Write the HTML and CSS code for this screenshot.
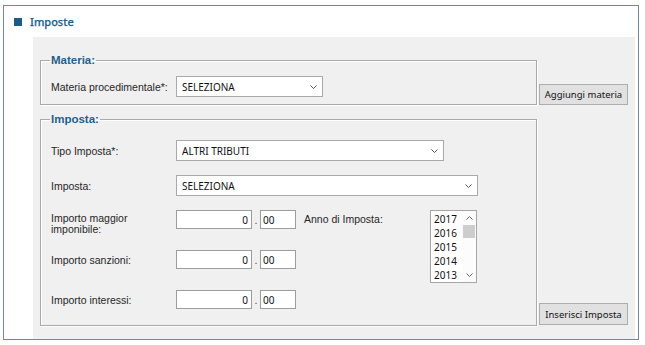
FILE: index.html
```html
<!DOCTYPE html>
<html lang="it">
<head>
    <meta charset="UTF-8">
    <title>Imposte</title>
    <link rel="stylesheet" href="styles.css">
</head>
<body>

<div class="frame">
    <div class="frame-head">
        <span class="head-square"></span>
        <span class="head-title">Imposte</span>
    </div>

    <div class="panel">
        <div class="group-row">
            <fieldset class="group group-materia">
                <legend>Materia:</legend>
                <div class="field">
                    <label class="field-label">Materia procedimentale*:</label>
                    <div class="select select-materia">
                        <span>SELEZIONA</span>
                        <svg class="chevron" width="7" height="4" viewBox="0 0 7 4"><path d="M0.5 0.5 L3.5 3.5 L6.5 0.5" fill="none" stroke="#555" stroke-width="1"/></svg>
                    </div>
                </div>
            </fieldset>
            <button class="btn btn-materia">Aggiungi materia</button>
        </div>

        <div class="group-row group-row-imposta">
            <fieldset class="group group-imposta">
                <legend>Imposta:</legend>
                <div class="field">
                    <label class="field-label">Tipo Imposta*:</label>
                    <div class="select select-tipo">
                        <span>ALTRI TRIBUTI</span>
                        <svg class="chevron" width="7" height="4" viewBox="0 0 7 4"><path d="M0.5 0.5 L3.5 3.5 L6.5 0.5" fill="none" stroke="#555" stroke-width="1"/></svg>
                    </div>
                </div>
                <div class="field">
                    <label class="field-label">Imposta:</label>
                    <div class="select select-imposta">
                        <span>SELEZIONA</span>
                        <svg class="chevron" width="7" height="4" viewBox="0 0 7 4"><path d="M0.5 0.5 L3.5 3.5 L6.5 0.5" fill="none" stroke="#555" stroke-width="1"/></svg>
                    </div>
                </div>

                <div class="amounts">
                    <div class="amount-list">
                        <div class="amount-row">
                            <label class="field-label label-two">Importo maggior<br>imponibile:</label>
                            <input class="num-int" type="text" value="0">
                            <span class="num-dot">.</span>
                            <input class="num-dec" type="text" value="00">
                        </div>
                        <div class="amount-row">
                            <label class="field-label">Importo sanzioni:</label>
                            <input class="num-int" type="text" value="0">
                            <span class="num-dot">.</span>
                            <input class="num-dec" type="text" value="00">
                        </div>
                        <div class="amount-row">
                            <label class="field-label">Importo interessi:</label>
                            <input class="num-int" type="text" value="0">
                            <span class="num-dot">.</span>
                            <input class="num-dec" type="text" value="00">
                        </div>
                    </div>

                    <div class="anno-label">Anno di Imposta:</div>
                    <div class="listbox">
                        <ul class="listbox-items">
                            <li>2017</li>
                            <li>2016</li>
                            <li>2015</li>
                            <li>2014</li>
                            <li>2013</li>
                        </ul>
                        <div class="scrollbar">
                            <div class="scroll-btn">
                                <svg width="7" height="4" viewBox="0 0 7 4"><path d="M0.5 3.5 L3.5 0.5 L6.5 3.5" fill="none" stroke="#606060" stroke-width="1"/></svg>
                            </div>
                            <div class="scroll-thumb"></div>
                            <div class="scroll-track"></div>
                            <div class="scroll-btn">
                                <svg width="7" height="4" viewBox="0 0 7 4"><path d="M0.5 0.5 L3.5 3.5 L6.5 0.5" fill="none" stroke="#606060" stroke-width="1"/></svg>
                            </div>
                        </div>
                    </div>
                </div>
            </fieldset>
            <button class="btn btn-imposta">Inserisci Imposta</button>
        </div>
    </div>
</div>

</body>
</html>
```

FILE: styles.css
```css
body {
    margin: 5px 6px 5px 3px;
    font-family: "Liberation Sans", Arial, sans-serif;
    font-size: 10.5px;
    color: #262626;
    background: #fff;
}

.frame {
    box-sizing: border-box;
    height: 335px;
    border: 1px solid #6c88ae;
    display: flex;
    flex-direction: column;
}

.frame-head {
    height: 31px;
    display: flex;
    align-items: center;
    padding-left: 10px;
    gap: 8px;
}

.head-square {
    width: 8px;
    height: 8px;
    background: #1d5a86;
}

.head-title {
    font-family: "Noto Sans", sans-serif;
    font-size: 11px;
    font-weight: 500;
    color: #1f5f8b;
    -webkit-text-stroke: 0.25px #1f5f8b;
}

.panel {
    flex: 1;
    margin: 0 3px 0 29px;
    padding: 16px 0 0 7px;
    background: #f0f0f0;
}

.group-row {
    display: flex;
    align-items: flex-end;
    gap: 2px;
}

.group-row-imposta {
    margin-top: 7px;
}

.group {
    box-sizing: border-box;
    width: 497px;
    margin: 0;
    padding: 9px 10px 7px 10px;
    border: 1px solid #a9a9a9;
    box-shadow: inset 1px 1px 0 #fff, 1px 1px 0 #fff;
}

.group legend {
    padding: 0 1px;
    margin-left: -1px;
    font-weight: bold;
    font-size: 11.5px;
    line-height: 14px;
    color: #1f5f8b;
}

.group-imposta {
    padding-top: 14px;
    padding-bottom: 16px;
}

.field {
    display: flex;
    align-items: center;
}

.group-imposta .field {
    margin-bottom: 14px;
}

.field-label {
    width: 125px;
    flex-shrink: 0;
}

.select {
    box-sizing: border-box;
    height: 21px;
    display: flex;
    align-items: center;
    justify-content: space-between;
    padding: 0 5px 0 5px;
    background: #fff;
    border: 1px solid #a9a9a9;
    font-family: "Noto Sans", sans-serif;
    font-size: 10px;
    color: #111;
}

.select-materia { width: 147px; }
.select-tipo { width: 268px; }
.select-imposta { width: 302px; }

.amounts {
    display: flex;
    align-items: flex-start;
}

.amount-row {
    display: flex;
    align-items: center;
    height: 19px;
    margin-bottom: 21px;
}

.amount-row:last-child {
    margin-bottom: 0;
}

.label-two {
    line-height: 11px;
    margin-top: 9px;
}

.amount-row input {
    box-sizing: border-box;
    height: 19px;
    margin: 0;
    border: 1px solid #9d9d9d;
    background: #fff;
    font-family: "Noto Sans", sans-serif;
    font-size: 10px;
    color: #111;
    outline: none;
}

.num-int {
    width: 76px;
    text-align: right;
    padding: 0 3px 0 0;
}

.num-dec {
    width: 36px;
    padding: 0 0 0 2px;
}

.num-dot {
    width: 8px;
    text-align: center;
    color: #444;
}

.anno-label {
    width: 126px;
    margin-left: 8px;
    margin-top: 3px;
}

.listbox {
    box-sizing: border-box;
    width: 47px;
    height: 73px;
    display: flex;
    background: #fff;
    border: 1px solid #a6a6a6;
}

.listbox-items {
    flex: 1;
    list-style: none;
    margin: 0;
    padding: 1px 0 0 3px;
    font-family: "Noto Sans", sans-serif;
    font-size: 10px;
    line-height: 14px;
    color: #111;
}

.scrollbar {
    width: 14px;
    display: flex;
    flex-direction: column;
    background: #fcfcfc;
}

.scroll-btn {
    height: 14px;
    display: flex;
    align-items: center;
    justify-content: center;
}

.scroll-thumb {
    height: 13px;
    margin: 0 1px;
    background: #cdcdcd;
}

.scroll-track {
    flex: 1;
}

.btn {
    box-sizing: border-box;
    padding: 0;
    background: #e1e1e1;
    border: 1px solid #adadad;
    font-family: "Noto Sans", sans-serif;
    font-size: 9.5px;
    color: #111;
}

.btn-materia {
    width: 89px;
    height: 21px;
}

.btn-imposta {
    width: 89px;
    height: 22px;
    margin-bottom: 1px;
}
```
